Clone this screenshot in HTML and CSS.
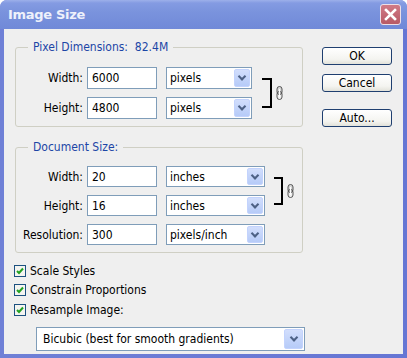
FILE: index.html
```html
<!DOCTYPE html>
<html lang="en">
<head>
  <meta charset="UTF-8" />
  <title>Image Size</title>
  <link rel="stylesheet" href="styles.css">
</head>
<body>
  <div class="window">
    <div class="titlebar">
      <span class="title">Image Size</span>
      <button class="close" aria-label="Close">
        <svg width="13" height="13" viewBox="0 0 13 13"><path d="M2 2 L11 11 M11 2 L2 11" stroke="#fff" stroke-width="2.6" stroke-linecap="square" /></svg>
      </button>
    </div>

    <div class="client">
      <div class="main">
        <!-- Pixel dimensions group -->
        <fieldset class="group pixels">
          <legend>Pixel Dimensions:&nbsp; 82.4M</legend>
          <div class="rows">
            <label class="label">Width:</label>
            <input class="field" value="6000">
            <div class="select"><span class="value">pixels</span><span class="arrow"></span></div>
            <div class="bracket"></div>
            <svg class="link" width="7" height="14" viewBox="0 0 7 14"><rect x="1" y="0.5" width="5" height="8" rx="2.5" fill="#d6d6d6" stroke="#555" /><rect x="1" y="5.5" width="5" height="8" rx="2.5" fill="none" stroke="#555" /><path d="M3.5 3 V11" stroke="#fff" /></svg>

            <label class="label">Height:</label>
            <input class="field" value="4800">
            <div class="select"><span class="value">pixels</span><span class="arrow"></span></div>
          </div>
        </fieldset>

        <!-- Document size group -->
        <fieldset class="group document">
          <legend>Document Size:</legend>
          <div class="rows">
            <label class="label">Width:</label>
            <input class="field" value="20">
            <div class="select"><span class="value">inches</span><span class="arrow"></span></div>
            <div class="bracket"></div>
            <svg class="link" width="7" height="14" viewBox="0 0 7 14"><rect x="1" y="0.5" width="5" height="8" rx="2.5" fill="#d6d6d6" stroke="#555" /><rect x="1" y="5.5" width="5" height="8" rx="2.5" fill="none" stroke="#555" /><path d="M3.5 3 V11" stroke="#fff" /></svg>

            <label class="label">Height:</label>
            <input class="field" value="16">
            <div class="select"><span class="value">inches</span><span class="arrow"></span></div>

            <label class="label">Resolution:</label>
            <input class="field" value="300">
            <div class="select"><span class="value">pixels/inch</span><span class="arrow"></span></div>
          </div>
        </fieldset>

        <div class="checks">
          <div class="check"><span class="box"></span>Scale Styles</div>
          <div class="check"><span class="box"></span>Constrain Proportions</div>
          <div class="check"><span class="box"></span>Resample Image:</div>
        </div>

        <div class="select method"><span class="value">Bicubic (best for smooth gradients)</span><span class="arrow"></span></div>
      </div>

      <div class="buttons">
        <button class="btn ok">OK</button>
        <button class="btn">Cancel</button>
        <button class="btn auto">Auto...</button>
      </div>
    </div>
  </div>
</body>
</html>
```

FILE: styles.css
```css
/* Basic resets */
* {
  box-sizing: border-box;
  margin: 0;
  padding: 0;
}

body {
  font-family: "DejaVu Sans Condensed", "DejaVu Sans", sans-serif;
  font-size: 12px;
  color: #000;
  background: #fff;
}

/* Window frame */
.window {
  width: 407px;
  height: 358px;
  display: flex;
  flex-direction: column;
  background: linear-gradient(to right, #6f80d6, #6676d4);
  border-radius: 7px 7px 0 0;
  overflow: hidden;
}

.titlebar {
  height: 29px;
  flex: 0 0 29px;
  display: flex;
  align-items: center;
  justify-content: space-between;
  padding: 0 6px 0 8px;
  background: linear-gradient(to bottom, #9db0ea 0, #849be2 3px, #7a93dd 12px, #7089d8 100%);
}

.title {
  font-family: "DejaVu Sans", sans-serif;
  font-weight: bold;
  font-size: 13px;
  color: #eef1fb;
  letter-spacing: -0.3px;
}

.close {
  width: 21px;
  height: 21px;
  display: flex;
  align-items: center;
  justify-content: center;
  border: 1px solid #ecdfe6;
  border-radius: 3px;
  background: linear-gradient(to bottom, #d07a86, #b85a66);
}

/* Client area */
.client {
  flex: 1;
  display: flex;
  margin: 0 4px 4px 4px;
  background: #efefef;
}

.main {
  flex: 0 0 302px;
  padding-top: 11px;
  padding-left: 11px;
}

/* Group boxes */
.group {
  width: 288px;
  border: 1px solid #cfcfc4;
  border-radius: 3px;
  padding: 12px 0 7px 0;
}

.group legend {
  margin-left: 12px;
  padding: 0 5px;
  line-height: 15px;
  color: #1c46a6;
}

.document {
  margin-top: 13px;
  padding-top: 11px;
}

.rows {
  display: grid;
  grid-template-columns: 67px 74px 95px 20px auto;
  grid-auto-rows: 22px;
  row-gap: 8px;
}

.document .rows {
  grid-template-columns: 67px 74px 108px 18px auto;
  grid-auto-rows: 21px;
}

.label {
  grid-column: 1;
  align-self: center;
  text-align: right;
  white-space: nowrap;
}

.field {
  grid-column: 2;
  margin-left: 4px;
  width: 70px;
  height: 100%;
  border: 1px solid #7f9db9;
  background: #fff;
  padding: 0 4px;
  font: inherit;
  color: #000;
}

/* Dropdowns */
.select {
  display: flex;
  align-items: center;
  justify-content: space-between;
  height: 100%;
  border: 1px solid #7f9db9;
  background: #fff;
  padding: 1px 1px 1px 3px;
}

.rows .select {
  grid-column: 3;
  margin-left: 9px;
}

.value {
  white-space: nowrap;
}

.arrow {
  width: 16px;
  height: 100%;
  border: 1px solid #c3d3fd;
  border-radius: 2px;
  background: linear-gradient(to bottom, #d2defc, #b6cbf8);
  position: relative;
}

.arrow::after {
  content: "";
  position: absolute;
  left: 50%;
  top: 50%;
  width: 4px;
  height: 4px;
  border-right: 2px solid #4d6185;
  border-bottom: 2px solid #4d6185;
  transform: translate(-50%, -75%) rotate(45deg);
}

/* Constrain bracket and link */
.bracket {
  grid-column: 4;
  grid-row: 1 / 3;
  margin: 11px 0 11px 10px;
  width: 10px;
  border: 2px solid #000;
  border-left: none;
}

.document .bracket {
  margin-left: 9px;
  width: 9px;
}

.link {
  grid-column: 5;
  grid-row: 1 / 3;
  align-self: center;
  margin-left: 4px;
}

/* Checkboxes */
.checks {
  margin-top: 8px;
  margin-left: -1px;
}

.check {
  display: flex;
  align-items: center;
  height: 19.5px;
  gap: 4px;
}

.box {
  width: 12px;
  height: 12px;
  border: 1px solid #1c5180;
  background: #f4f4f0 url("data:image/svg+xml,%3Csvg xmlns='http://www.w3.org/2000/svg' width='10' height='10'%3E%3Cpath d='M2 5 L4 7 L8 2.5' fill='none' stroke='%2321a121' stroke-width='2'/%3E%3C/svg%3E") center / 10px 10px no-repeat;
}

.method {
  width: 269px;
  height: 24px;
  margin-top: 7px;
  margin-left: 21px;
  padding-left: 6px;
}

.method .arrow {
  width: 19px;
}

/* Buttons column */
.buttons {
  display: flex;
  flex-direction: column;
  gap: 9px;
  padding-top: 18px;
  margin-left: 16px;
}

.btn {
  width: 70px;
  height: 18px;
  border: 1px solid #1f3f70;
  border-radius: 3px;
  background: linear-gradient(to bottom, #ffffff, #f4f4f0 70%, #e2e2da);
  font: inherit;
  color: #000;
}

.auto {
  margin-top: 8px;
}
```
